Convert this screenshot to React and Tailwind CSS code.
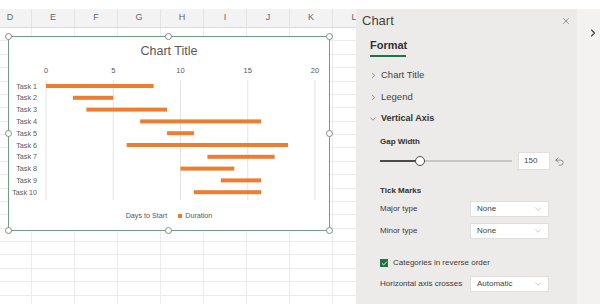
import { ChevronRight, ChevronDown, X, Undo2, Check } from 'lucide-react';

const COLS = ['D', 'E', 'F', 'G', 'H', 'I', 'J', 'K', 'L'];
const TASKS = [
  [0, 8], [2, 5], [3, 9], [7, 16], [9, 11],
  [6, 18], [12, 17], [10, 14], [13, 16], [11, 16],
];
const X0 = 37;
const UNIT = 13.45;

const Handle = ({ className }) => (
  <span className={`absolute w-[7px] h-[7px] rounded-full bg-white border border-[#8a8a8a] ${className}`} />
);

const Chart = () => (
  <div className="absolute left-[8px] top-[27px] w-[322px] h-[195px] border border-[#6f9f80] bg-white font-['Liberation_Sans',sans-serif]">
    <div className="pt-[6px] text-center text-[12.5px] leading-[16px] text-[#595959]">Chart Title</div>
    <svg width="320" height="144" className="block">
      {[0, 5, 10, 15, 20].map((v) => (
        <g key={v}>
          <line x1={X0 + v * UNIT} x2={X0 + v * UNIT} y1="21" y2="141" stroke="#e3e3e3" strokeWidth="1" />
          <text x={X0 + v * UNIT} y="13.5" fontSize="7.5" fill="#595959" textAnchor="middle">{v}</text>
        </g>
      ))}
      {TASKS.map(([s, e], i) => {
        const y = 27 + i * 11.8;
        return (
          <g key={i}>
            <text x="28" y={y + 2.5} fontSize="7.2" fill="#595959" textAnchor="end">Task {i + 1}</text>
            <rect x={X0 + s * UNIT} y={y - 2} width={(e - s) * UNIT} height="4" fill="#ed7d31" />
          </g>
        );
      })}
    </svg>
    <div className="mt-[8px] flex items-center justify-center gap-[3px] text-[7.2px] leading-[10px] text-[#595959]">
      <span className="mr-[8px]">Days to Start</span>
      <span className="w-[4px] h-[4px] bg-[#ed7d31]" />
      <span>Duration</span>
    </div>
    <Handle className="-left-[4px] -top-[4px]" />
    <Handle className="left-[156px] -top-[4px]" />
    <Handle className="-right-[4px] -top-[4px]" />
    <Handle className="-left-[4px] top-[93px]" />
    <Handle className="-right-[4px] top-[93px]" />
    <Handle className="-left-[4px] -bottom-[4px]" />
    <Handle className="left-[156px] -bottom-[4px]" />
    <Handle className="-right-[4px] -bottom-[4px]" />
  </div>
);

const Sheet = () => (
  <div className="relative w-[356px] shrink-0 overflow-hidden">
    <div className="flex -ml-[11px] h-[19px] bg-[#f3f3f3] border-b border-[#dadada]">
      {COLS.map((c) => (
        <div key={c} className="w-[43px] shrink-0 flex items-center justify-center text-[9px] text-[#666] border-r border-[#e4e4e4]">
          {c}
        </div>
      ))}
    </div>
    <div className="-ml-[11px]">
      {Array.from({ length: 21 }).map((_, r) => (
        <div key={r} className="flex h-[13.375px] border-b border-[#ececec]">
          {COLS.map((c) => (
            <div key={c} className="w-[43px] shrink-0 border-r border-[#ececec]" />
          ))}
        </div>
      ))}
    </div>
    <Chart />
  </div>
);

const Dropdown = ({ value }) => (
  <div className="w-[79px] h-[16px] bg-white border border-[#e1dfdd] flex items-center justify-between pl-[6px] pr-[5px] text-[8px] text-[#444]">
    <span>{value}</span>
    <ChevronDown size={10} strokeWidth={1} className="text-[#8a8886]" />
  </div>
);

const Row = ({ label, value, className }) => (
  <div className={`flex items-center h-[16px] ${className}`}>
    <span className="w-[90px] text-[8px] text-[#3b3a39]">{label}</span>
    <Dropdown value={value} />
  </div>
);

const Panel = () => (
  <div className="w-[221px] shrink-0 bg-[#edebe9] font-['Liberation_Sans',sans-serif] text-[#323130]">
    <div className="h-[23px] flex items-center justify-between pl-[6px] pr-[6px]">
      <span className="text-[13px] text-[#444]">Chart</span>
      <X size={10} strokeWidth={1.6} className="text-[#666]" />
    </div>
    <div className="pt-[6px] pl-[14px]">
      <div className="text-[11px] leading-[14px] font-semibold">Format</div>
      <div className="mt-[3px] w-[36px] h-[2px] bg-[#217346]" />
    </div>
    <div className="mt-[7px] pl-[13px] h-[22px] flex items-center gap-[3px] text-[9.5px] text-[#444]">
      <ChevronRight size={9} strokeWidth={1.5} />
      <span>Chart Title</span>
    </div>
    <div className="pl-[13px] h-[22px] flex items-center gap-[3px] text-[9.5px] text-[#444]">
      <ChevronRight size={9} strokeWidth={1.5} />
      <span>Legend</span>
    </div>
    <div className="pl-[12px] h-[21px] flex items-center gap-[3px] text-[9px] font-semibold text-[#333]">
      <ChevronDown size={10} strokeWidth={1.5} className="text-[#555]" />
      <span>Vertical Axis</span>
    </div>
    <div className="pl-[24px]">
      <div className="mt-[7px] text-[8px] leading-[12px] font-semibold">Gap Width</div>
      <div className="mt-[4px] h-[18px] flex items-center">
        <div className="relative w-[132px] h-[2px] bg-[#c8c6c4]">
          <div className="w-[40px] h-[2px] bg-[#4a4a4a]" />
          <span className="absolute left-[35px] -top-[4px] w-[10px] h-[10px] rounded-full bg-white border-[1.5px] border-[#4a4a4a]" />
        </div>
        <div className="ml-[6px] w-[32px] h-[18px] bg-white border border-[#e1dfdd] flex items-center pl-[5px] text-[8px] text-[#444]">150</div>
        <Undo2 size={11} strokeWidth={1.4} className="ml-[4px] text-[#605e5c]" />
      </div>
      <div className="mt-[15px] text-[8px] leading-[12px] font-semibold">Tick Marks</div>
      <Row label="Major type" value="None" className="mt-[4px]" />
      <Row label="Minor type" value="None" className="mt-[6px]" />
      <div className="mt-[18px] h-[12px] flex items-center gap-[5px]">
        <span className="w-[8px] h-[8px] bg-[#217346] flex items-center justify-center">
          <Check size={7} strokeWidth={3} className="text-white" />
        </span>
        <span className="text-[8px] text-[#3b3a39]">Categories in reverse order</span>
      </div>
      <Row label="Horizontal axis crosses" value="Automatic" className="mt-[7px]" />
    </div>
  </div>
);

export default function App() {
  return (
    <div className="w-[600px] h-[304px] overflow-hidden bg-white flex flex-col font-['Liberation_Sans',sans-serif]">
      <div className="h-[9px] shrink-0 bg-white" />
      <div className="flex flex-1 min-h-0">
        <Sheet />
        <Panel />
        <div className="flex-1 bg-[#f3f2f1] pt-[18px] pl-[10px]">
          <ChevronRight size={12} strokeWidth={2.2} className="text-[#3a3a3a]" />
        </div>
      </div>
    </div>
  );
}
